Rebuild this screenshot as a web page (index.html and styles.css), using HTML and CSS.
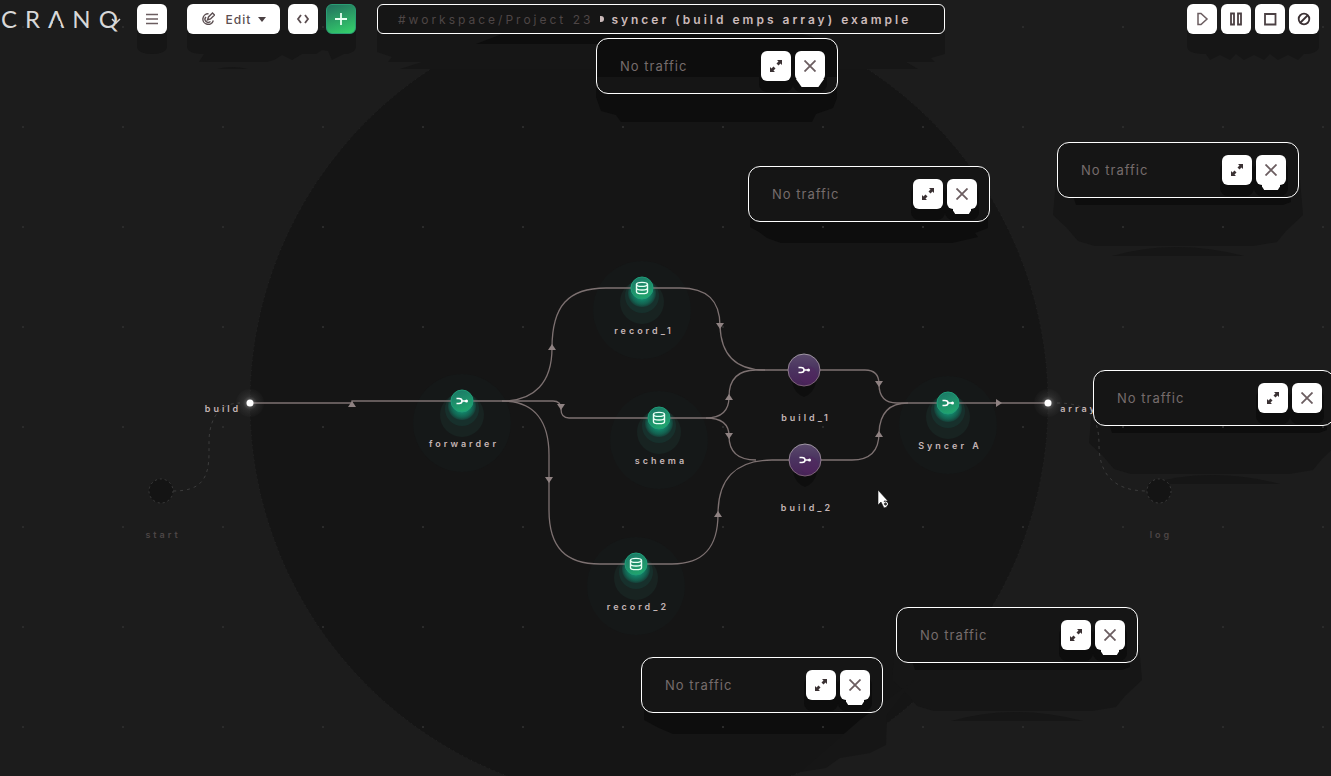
FILE: index.html
```html
<!DOCTYPE html>
<html lang="en">
<head>
<meta charset="utf-8">
<title>CRANQ - syncer (build emps array) example</title>
<link rel="stylesheet" href="styles.css">
</head>
<body>
<svg class="sprite" aria-hidden="true">
  <symbol id="i-expand" viewBox="0 0 12 12"><path d="M7 0h5v5l-1.500-1.500L8.500 5.500 6.500 3.500l2-2zM5 12H0V7l1.500 1.500L3.500 6.500l2 2-2 2z" fill="#3a3133"/></symbol>
  <symbol id="i-close" viewBox="0 0 12 12"><path d="M.5.5l11 11M11.500.5l-11 11" fill="none" stroke="#6b5d60" stroke-width="1.800"/></symbol>
  <symbol id="i-merge" viewBox="-7 -5 14 10"><path d="M-5.500-2.500h2.500c4 0 4 5 0 5h-2.500M0 0h4" fill="none" stroke="#fff" stroke-width="1.500"/><circle cx="4.500" cy="0" r="1.500" fill="#fff"/></symbol>
  <symbol id="i-store" viewBox="-7 -7 14 14"><path d="M-5.500-3.500v7.200c0 2.600 11 2.600 11 0v-7.200M-5.500 0c0 2.600 11 2.600 11 0" fill="none" stroke="#e9fff6" stroke-width="1.400"/><ellipse cy="-3.600" rx="5.500" ry="2" fill="none" stroke="#e9fff6" stroke-width="1.400"/></symbol>
  <symbol id="arrow" viewBox="-5 -4 10 8" overflow="visible"><path d="M-4 3h8L0-3z" fill="#8f8282"/></symbol>
</svg>

<main class="workspace">
  <svg class="canvas" aria-label="Flow diagram">
    <defs>
      <pattern id="grid" x="22" y="26" width="100" height="100" patternUnits="userSpaceOnUse"><rect width="2" height="2" fill="#2b2b2b"/></pattern>
      <linearGradient id="green" x1="0" y1="0" x2=".4" y2="1"><stop offset="0" stop-color="#1b7466"/><stop offset="1" stop-color="#20a36e"/></linearGradient>
      <linearGradient id="purple" x1="0" y1="0" x2="0" y2="1"><stop offset="0" stop-color="#5a4a6b"/><stop offset=".45" stop-color="#4b3460"/><stop offset="1" stop-color="#472357"/></linearGradient>
      <linearGradient id="rim" x1="0" y1="0" x2="0" y2="1"><stop offset="0" stop-color="#a097a4"/><stop offset="1" stop-color="#7c5f76"/></linearGradient>
      <radialGradient id="halo"><stop offset="0" stop-color="#fff" stop-opacity=".5"/><stop offset=".5" stop-color="#999" stop-opacity=".14"/><stop offset="1" stop-color="#666" stop-opacity=".04"/></radialGradient>
      <radialGradient id="glow"><stop offset=".5" stop-color="#128066"/><stop offset=".8" stop-color="#13604f"/><stop offset="1" stop-color="#163f38"/></radialGradient>
      <g id="green-base">
        <circle cy="22" r="49" fill="#151818"/>
        <circle cy="14" r="22" fill="#182321"/>
        <circle cy="8" r="17" fill="#17302c"/>
        <circle cy="5" r="14" fill="url(#glow)"/>
      </g>
      <g id="purple-base">
        <path d="M-12 12h24q-2 11-12 15-10-4-12-15z" fill="#0e0e0e"/>
        <circle r="16" fill="url(#purple)" stroke="url(#rim)"/>
        <circle cx="4" cy="5" r="9" fill="#542361" opacity=".4"/>
      </g>
    </defs>

    <circle cx="649" cy="403" r="399" fill="#151515" stroke="#262626" stroke-dasharray="1 4"/>

    <g fill="#161616">
      <path d="M137 30H167V48Q164 54 152 54T137 48Z"/>
      <path d="M187 30H356V48Q353 54 344 54L332 60 328 51 322 50 316 54H302L292 60 282 55 274 60 267 62H199L204 54Q187 54 187 46Z"/>
      <path d="M217 69Q232 65 248 69Z"/>
      <path d="M377 30H945V54L931 58 935 62H906L918 69H400L422 62H388L392 57 377 52Z"/>
      <path d="M1187 30H1319V48Q1316 54 1304 54L1298 60 1288 55 1278 60 1270 54 1264 60 1254 55 1244 60 1236 54 1230 60 1220 55 1210 60 1206 54Q1187 54 1187 46Z"/>
    </g>
    <g fill="#0d0d0d">
      <path d="M502 34h300l34 10H476z"/>
      <path d="M596 82h241v16l-4 10-17 6-4 8H621l-5-7-15-4-5-14z"/>
      <path d="M750 210h238v18l-13 5 3 4-26 6H781l-14-5-8-6-9-5z"/>
      <path d="M644 700h237v18l-12 7-24 9H673l-14-6-15-8z"/>
    </g>
    <g fill="#161616">
      <g id="far">
        <path d="M1056 180h244l3 35-17 16-9 11-24 4H1095l-17-5-12-14-13-12z"/>
        <path d="M1112 256q63-18 132 0z"/>
        <path d="M1071 190h220v12l-8 3H1076z" fill="#0d0d0d"/>
      </g>
      <use href="#far" x="36" y="228"/>
      <use href="#far" x="-161" y="465"/>
      <path d="M914 680L887 715 886 745 870 753 840 758 826 768 800 772 860 720Z"/>
    </g>
    <rect width="100%" height="100%" fill="url(#grid)"/>

    <g class="ghost">
      <path d="M173 491C200 491 209 480 209 453V440C210 415 222 403 240 403"/>
      <path d="M1057 403C1087 403 1099 415 1099 445C1099 475 1115 491 1147 491"/>
      <circle cx="161" cy="491" r="12"/>
      <circle cx="1159" cy="491" r="12"/>
    </g>

    <use href="#green-base" x="462" y="401"/>
    <use href="#green-base" x="642" y="288"/>
    <use href="#green-base" x="659" y="418"/>
    <use href="#green-base" x="636" y="564"/>
    <use href="#green-base" x="948" y="403"/>

    <g class="wires">
      <path d="M250 403H352V401H502"/>
      <path d="M502 401C535 401 552 382 552 348C552 306 568 288 606 288H680"/>
      <path d="M502 401H553Q561 401 561 409Q561 418 569 418H706"/>
      <path d="M502 401C535 401 549 422 549 455V510C549 548 566 564 600 564H672"/>
      <path d="M680 288C707 288 720 300 720 326C721 354 735 370 765 370"/>
      <path d="M706 418Q729 418 729 397Q729 370 756 370H865"/>
      <path d="M706 418Q729 418 729 436Q729 460 756 460"/>
      <path d="M672 564C703 564 718 548 718 514C718 480 735 460 772 460H852"/>
      <path d="M865 370Q879 370 879 384Q879 403 897 403H1048"/>
      <path d="M852 460Q879 460 879 433Q880 403 908 403"/>
    </g>
    <g>
      <use href="#arrow" x="-5" y="-4" width="10" height="8" transform="translate(352 404)"/>
      <use href="#arrow" x="-5" y="-4" width="10" height="8" transform="translate(552 347)"/>
      <use href="#arrow" x="-5" y="-4" width="10" height="8" transform="translate(561 407) rotate(180)"/>
      <use href="#arrow" x="-5" y="-4" width="10" height="8" transform="translate(549 480) rotate(180)"/>
      <use href="#arrow" x="-5" y="-4" width="10" height="8" transform="translate(720 326) rotate(180)"/>
      <use href="#arrow" x="-5" y="-4" width="10" height="8" transform="translate(729 397)"/>
      <use href="#arrow" x="-5" y="-4" width="10" height="8" transform="translate(729 436) rotate(180)"/>
      <use href="#arrow" x="-5" y="-4" width="10" height="8" transform="translate(718 514)"/>
      <use href="#arrow" x="-5" y="-4" width="10" height="8" transform="translate(879 384) rotate(180)"/>
      <use href="#arrow" x="-5" y="-4" width="10" height="8" transform="translate(879 434)"/>
      <use href="#arrow" x="-5" y="-4" width="10" height="8" transform="translate(999 403) rotate(90)"/>
    </g>

    <g fill="url(#green)" stroke="#1f9c77">
      <circle cx="462" cy="401" r="11"/><circle cx="642" cy="288" r="11"/><circle cx="659" cy="418" r="11"/><circle cx="636" cy="564" r="11"/><circle cx="948" cy="403" r="11"/>
    </g>
    <use href="#i-merge" x="455" y="396" width="14" height="10"/>
    <use href="#i-merge" x="941" y="398" width="14" height="10"/>
    <use href="#i-store" x="635" y="281" width="14" height="14"/>
    <use href="#i-store" x="652" y="411" width="14" height="14"/>
    <use href="#i-store" x="629" y="557" width="14" height="14"/>
    <use href="#purple-base" x="804" y="370"/>
    <use href="#purple-base" x="805" y="460"/>
    <use href="#i-merge" x="797" y="365" width="14" height="10"/>
    <use href="#i-merge" x="798" y="455" width="14" height="10"/>

    <circle cx="250" cy="403" r="14" fill="url(#halo)"/><circle cx="250" cy="403" r="3.500" fill="#fff"/>
    <circle cx="1048" cy="403" r="14" fill="url(#halo)"/><circle cx="1048" cy="403" r="3.500" fill="#fff"/>

    <g class="labels">
      <text x="223" y="412">build</text>
      <text x="464" y="447">forwarder</text>
      <text x="644" y="334">record_1</text>
      <text x="661" y="464">schema</text>
      <text x="638" y="610">record_2</text>
      <text x="806" y="421">build_1</text>
      <text x="807" y="511">build_2</text>
      <text x="950" y="449">Syncer A</text>
      <text x="1079" y="412">array</text>
      <text class="dim" x="163" y="538">start</text>
      <text class="dim" x="1161" y="538">log</text>
    </g>
    <path d="M878 490v15l3-3 3 6 3-1-3-6h4z" fill="#fff" stroke="#111" stroke-width=".6"/>
    <circle cx="885.500" cy="504" r="2" fill="#333" stroke="#fff"/>
  </svg>

  <header class="bar">
    <div class="logo">CR<span class="peak">A</span>N<span class="tail">Q<svg viewBox="0 0 10 7"><path d="M1 1l4 4 4-4" fill="none" stroke="#d8d8d8" stroke-width="1.500"/></svg></span></div>
    <button class="btn menu" aria-label="Menu"><svg viewBox="0 0 14 12"><path d="M1 1.500h12M1 6h12M1 10.500h12" stroke="#6b5d60" stroke-width="1.300"/></svg></button>
    <div class="tools">
      <button class="btn edit"><svg viewBox="0 0 14 14"><path d="M7.500 1.800A5.300 5.300 0 1 0 12.300 8.500M5 5A3 3 0 0 0 9.500 9.500M6.500 8l1-3 4-4 2 2-4 4z" fill="none" stroke="#5b4e51" stroke-width="1.400"/></svg><span>Edit</span><i class="caret"></i></button>
      <button class="btn" aria-label="Code"><svg viewBox="0 0 14 12"><path d="M5 2L2 6l3 4M9 2l3 4-3 4" fill="none" stroke="#5b4e51" stroke-width="1.800"/></svg></button>
      <button class="btn add" aria-label="Add"><svg viewBox="0 0 14 14"><path d="M7 1v12M1 7h12" stroke="#e8fff2" stroke-width="1.800"/></svg></button>
    </div>
    <nav class="crumbs" aria-label="Location"><a href="#workspace">#workspace/Project 23</a><i class="mark"></i><strong>syncer (build emps array) example</strong></nav>
    <div class="run">
      <button class="btn" aria-label="Run"><svg viewBox="0 0 14 14"><path d="M3 1.500v11h3l6-5.500-6-5.500z" fill="none" stroke="#6b5d60" stroke-width="1.500"/></svg></button>
      <button class="btn" aria-label="Pause"><svg viewBox="0 0 14 14"><path d="M2 1.500h3v11H2zM9 1.500h3v11H9z" fill="none" stroke="#4b4043" stroke-width="1.800"/></svg></button>
      <button class="btn" aria-label="Stop"><svg viewBox="0 0 14 14"><path d="M2 2h10.500v10.500H2z" fill="none" stroke="#4b4043" stroke-width="1.800"/></svg></button>
      <button class="btn" aria-label="Clear"><svg viewBox="0 0 14 14"><path d="M11 3l-8 8" stroke="#3b3134" stroke-width="1.800"/><circle cx="7" cy="7" r="5.300" fill="none" stroke="#3b3134" stroke-width="1.800"/></svg></button>
    </div>
  </header>

  <section class="panel p1 tapered"><span>No traffic</span><button class="btn" aria-label="Expand"><svg><use href="#i-expand"/></svg></button><button class="btn close" aria-label="Close"><svg><use href="#i-close"/></svg></button></section>
  <section class="panel p2"><span>No traffic</span><button class="btn" aria-label="Expand"><svg><use href="#i-expand"/></svg></button><button class="btn close" aria-label="Close"><svg><use href="#i-close"/></svg></button></section>
  <section class="panel p3"><span>No traffic</span><button class="btn" aria-label="Expand"><svg><use href="#i-expand"/></svg></button><button class="btn close" aria-label="Close"><svg><use href="#i-close"/></svg></button></section>
  <section class="panel p4"><span>No traffic</span><button class="btn" aria-label="Expand"><svg><use href="#i-expand"/></svg></button><button class="btn" aria-label="Close"><svg><use href="#i-close"/></svg></button></section>
  <section class="panel p5"><span>No traffic</span><button class="btn" aria-label="Expand"><svg><use href="#i-expand"/></svg></button><button class="btn close" aria-label="Close"><svg><use href="#i-close"/></svg></button></section>
  <section class="panel p6"><span>No traffic</span><button class="btn" aria-label="Expand"><svg><use href="#i-expand"/></svg></button><button class="btn close" aria-label="Close"><svg><use href="#i-close"/></svg></button></section>
</main>
</body>
</html>
```

FILE: styles.css
```css
* { box-sizing: border-box; }
body { margin: 0; background: #1c1c1c; font-family: Inter, "Open Sans", sans-serif; }
.sprite { position: absolute; width: 0; height: 0; }

.workspace { position: relative; min-height: 100vh; overflow: hidden; }
.canvas { position: absolute; inset: 0; width: 100%; height: 100%; }
.wires path { fill: none; stroke: #7d7171; stroke-width: 1.3; }
.ghost path { fill: none; stroke: #3c3c3c; stroke-dasharray: 3 4; }
.ghost circle { fill: #141414; stroke: #3c3c3c; stroke-dasharray: 2 3; }
.labels text { fill: #c4b5b5; font-size: 9px; font-weight: 600; letter-spacing: 3px; text-anchor: middle; }
.labels .dim { fill: #4c4646; }

.bar { position: relative; z-index: 2; display: flex; align-items: center; padding: 4px 12px 4px 0; }
.logo { flex: none; width: 137px; padding-left: 1px; color: #d8d8d8; font-family: Lato, sans-serif; font-size: 24px; font-weight: 400; line-height: 28px; letter-spacing: 8px; white-space: nowrap; }
.peak, .tail { position: relative; }
.peak::after { content: ""; position: absolute; left: 4px; top: 17px; width: 9px; height: 4px; background: #1c1c1c; clip-path: polygon(15% 0, 85% 0, 100% 100%, 0 100%); }
.tail svg { position: absolute; left: 12px; top: 14px; width: 10px; height: 7px; }

.btn { flex: none; display: flex; align-items: center; justify-content: center; width: 30px; height: 30px; padding: 0; border: 0; border-radius: 6px; background: #fff; color: #5b4e51; font: inherit; position: relative; }
.btn svg { width: 14px; height: 14px; }
.tools { display: flex; gap: 8px; margin-left: 20px; }
.edit { width: 93px; gap: 7px; font-size: 12px; font-weight: 500; letter-spacing: 1px; }
.edit svg { margin-right: 4px; }
.caret { border: 4px solid transparent; border-top: 5px solid #4b4043; border-bottom: 0; }
.add { border: 1px solid #2a9d74; background: linear-gradient(160deg, #22705f, #35d46c); }
.crumbs { display: flex; align-items: center; flex: 0 1 568px; min-width: 0; height: 30px; margin-left: 21px; padding-left: 20px; border: 1px solid #fff; border-radius: 6px; background: #151515; color: #cbbaba; font-size: 12px; letter-spacing: 3px; white-space: nowrap; overflow: hidden; }
.crumbs a { color: #4e4646; text-decoration: none; }
.crumbs strong { font-weight: 600; }
.mark { flex: none; width: 4px; height: 6px; margin: 0 7px; border-radius: 0 3px 3px 0; background: #cbbaba; }
.run { display: flex; gap: 4px; margin-left: auto; }

.panel { position: absolute; z-index: 1; display: flex; align-items: center; gap: 4px; width: 242px; height: 56px; padding: 0 12px 0 23px; border: 1px solid #fff; border-radius: 12px; background: #151515; color: #766c6c; font-size: 13px; letter-spacing: 1px; }
.panel span { flex: 1; }
.panel .btn { box-shadow: 0 9px 0 2px #0d0d0d; }
.panel .close { box-shadow: none; }
.panel .btn svg { width: 12px; height: 12px; }
.panel .close::after { content: ""; position: absolute; left: 6px; top: 29px; width: 18px; height: 6px; background: #fff; clip-path: polygon(0 0, 100% 0, 100% 40%, 88% 100%, 12% 100%, 0 40%); }
.panel .close { box-shadow: 0 9px 0 2px #0d0d0d; }
.tapered .close::after { left: 1px; width: 28px; height: 8px; top: 28px; clip-path: polygon(0 0, 100% 0, 80% 100%, 20% 100%); }
.p1 { left: 596px; top: 38px; background: linear-gradient(#0d0d0d 70%, #151515 70%); }
.p2 { left: 748px; top: 166px; }
.p3 { left: 1057px; top: 142px; }
.p4 { left: 1093px; top: 370px; }
.p5 { left: 896px; top: 607px; }
.p6 { left: 641px; top: 657px; }
```
